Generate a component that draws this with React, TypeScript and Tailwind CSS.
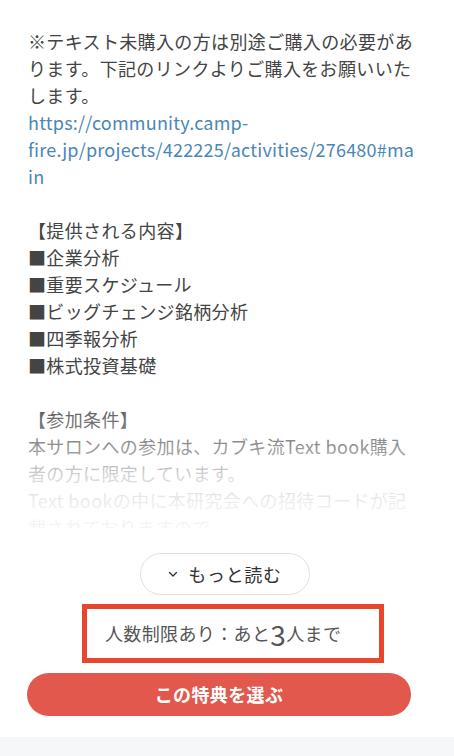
export default function App() {
  const font = { fontFamily: '"Noto Sans CJK JP", "Noto Sans", sans-serif' };
  return (
    <div className="w-[454px] min-h-[756px] bg-white flex flex-col" style={font}>
      <div className="pl-[28px] pr-[36px] pt-[28px]">
        <div className="relative h-[500px] overflow-hidden text-[18px] leading-[27px] tracking-[0.02em] text-[#444] break-words">
          <p>※テキスト未購入の方は別途ご購入の必要があります。下記のリンクよりご購入をお願いいたします。</p>
          <p>
            <a className="text-[#4a86b8] tracking-[0.012em]">https://community.camp-fire.jp/projects/422225/activities/276480#main</a>
          </p>
          <p>&nbsp;</p>
          <p>【提供される内容】</p>
          <p>■企業分析</p>
          <p>■重要スケジュール</p>
          <p>■ビッグチェンジ銘柄分析</p>
          <p>■四季報分析</p>
          <p>■株式投資基礎</p>
          <p>&nbsp;</p>
          <p>【参加条件】</p>
          <p>本サロンへの参加は、カブキ流Text book購入者の方に限定しています。</p>
          <p>
            Text bookの中に本研究会への招待コードが記載されておりますので、
            <br />
            ご確認ください。
          </p>
          <div className="absolute inset-x-0 bottom-0 h-[140px] bg-[linear-gradient(to_bottom,rgba(255,255,255,0)_0%,rgba(255,255,255,0.4)_40%,rgba(255,255,255,0.8)_65%,rgba(255,255,255,0.92)_85%,rgba(255,255,255,0.94)_100%)]" />
        </div>
      </div>

      <button className="mt-[25px] ml-[140px] w-[170px] h-[42px] rounded-full border border-[#e0e0e0] bg-white flex items-center justify-center gap-[10px] text-[18px] tracking-[0.04em] text-[#333]">
        <svg width="10" height="7" viewBox="0 0 10 7" fill="none">
          <path d="M1.5 1.5 L5 5 L8.5 1.5" stroke="#333" strokeWidth="1.4" strokeLinecap="round" strokeLinejoin="round" />
        </svg>
        <span>もっと読む</span>
      </button>

      <div className="mt-[9px] ml-[82px] w-[302px] h-[59px] border-[5px] border-[#e8452c] flex items-center pl-[18px] text-[18px] tracking-[0.02em] text-[#555]">
        <span>人数制限あり：あと</span>
        <span className="text-[28px] leading-none">3</span>
        <span>人まで</span>
      </div>

      <button className="mt-[10px] ml-[27px] w-[384px] h-[43px] rounded-full bg-[#e2584d] text-white font-bold text-[18px] tracking-[0.02em] flex items-center justify-center">
        この特典を選ぶ
      </button>

      <div className="mt-[21px] flex-1 min-h-[19px] bg-[#f6f7f9]" />
    </div>
  );
}
